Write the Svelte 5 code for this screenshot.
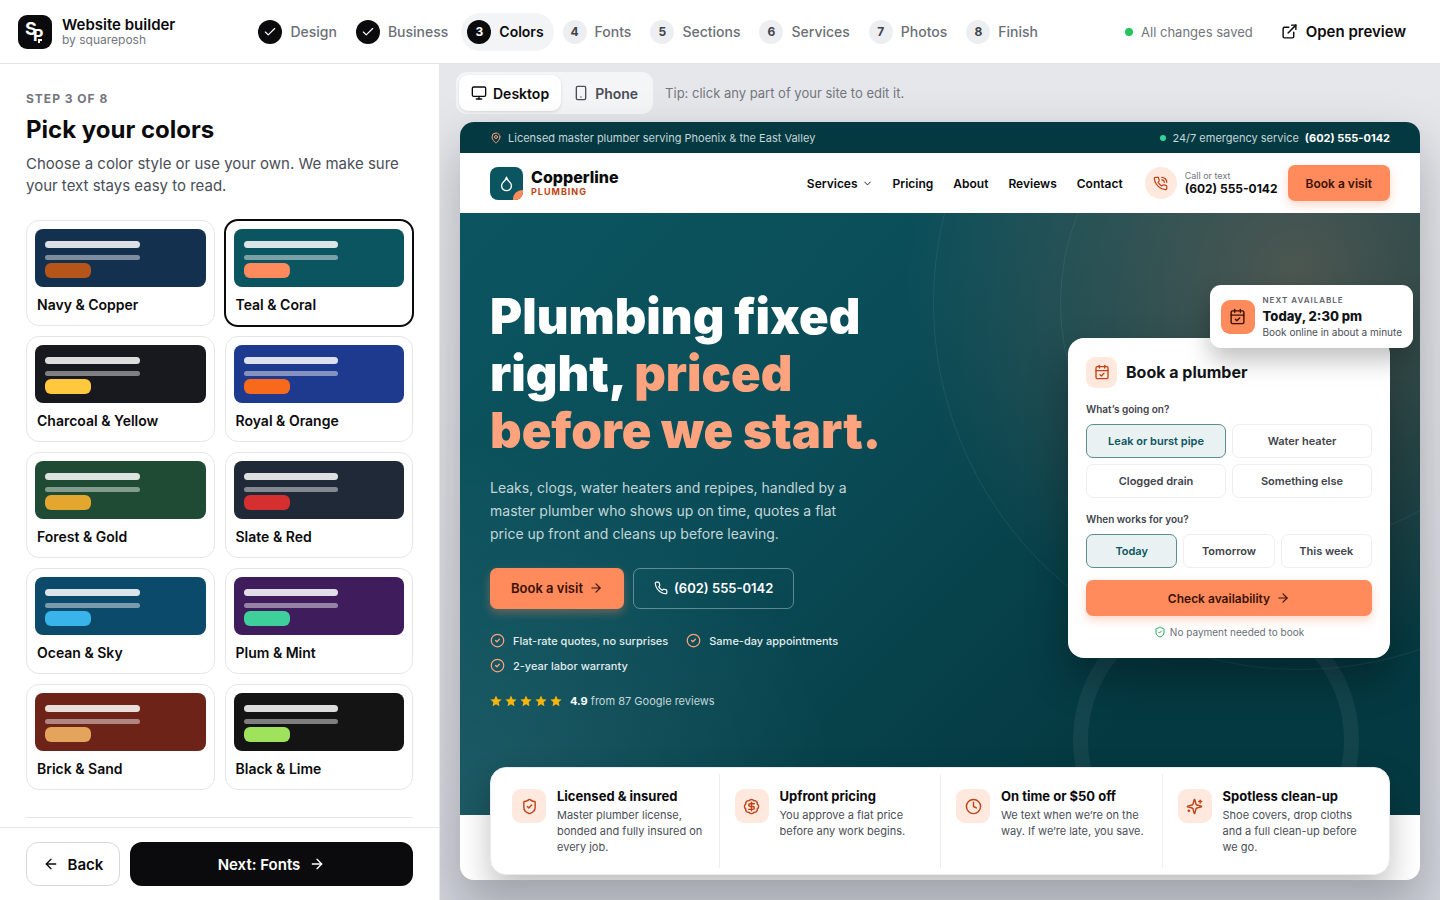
<script>
  const icons = {
    check: ["M20 6 9 17l-5-5"],
    right: ["M5 12h14", "m12 5 7 7-7 7"],
    left: ["m12 19-7-7 7-7", "M19 12H5"],
    down: ["m6 9 6 6 6-6"],
    external: [
      "M15 3h6v6",
      "M10 14 21 3",
      "M18 13v6a2 2 0 0 1-2 2H5a2 2 0 0 1-2-2V8a2 2 0 0 1 2-2h6"
    ],
    monitor: [
      "M4 3h16a2 2 0 0 1 2 2v10a2 2 0 0 1-2 2H4a2 2 0 0 1-2-2V5a2 2 0 0 1 2-2z",
      "M8 21h8",
      "M12 17v4"
    ],
    mobile: [
      "M7 2h10a2 2 0 0 1 2 2v16a2 2 0 0 1-2 2H7a2 2 0 0 1-2-2V4a2 2 0 0 1 2-2z",
      "M12 18h.01"
    ],
    pin: [
      "M20 10c0 4.993-5.539 10.193-7.399 11.799a1 1 0 0 1-1.202 0C9.539 20.193 4 14.993 4 10a8 8 0 0 1 16 0",
      "M15 10a3 3 0 1 1-6 0 3 3 0 0 1 6 0"
    ],
    drop: [
      "M12 22a7 7 0 0 0 7-7c0-2-1-3.9-3-5.5s-3.5-4-4-6.5c-.5 2.5-2 4.9-4 6.5C6 11.1 5 13 5 15a7 7 0 0 0 7 7z"
    ],
    phone: [
      "M22 16.92v3a2 2 0 0 1-2.18 2 19.79 19.79 0 0 1-8.63-3.07 19.5 19.5 0 0 1-6-6 19.79 19.79 0 0 1-3.07-8.67A2 2 0 0 1 4.11 2h3a2 2 0 0 1 2 1.72 12.84 12.84 0 0 0 .7 2.81 2 2 0 0 1-.45 2.11L8.09 9.91a16 16 0 0 0 6 6l1.27-1.27a2 2 0 0 1 2.11-.45 12.84 12.84 0 0 0 2.81.7A2 2 0 0 1 22 16.92z"
    ],
    calendar: [
      "M8 2v4",
      "M16 2v4",
      "M5 4h14a2 2 0 0 1 2 2v14a2 2 0 0 1-2 2H5a2 2 0 0 1-2-2V6a2 2 0 0 1 2-2z",
      "M3 10h18",
      "m9 16 2 2 4-4"
    ],
    shield: [
      "M20 13c0 5-3.5 7.5-7.66 8.95a1 1 0 0 1-.67-.01C7.5 20.5 4 18 4 13V6a1 1 0 0 1 1-1c2 0 4.5-1.2 6.24-2.72a1.17 1.17 0 0 1 1.52 0C14.51 3.81 17 5 19 5a1 1 0 0 1 1 1z",
      "m9 12 2 2 4-4"
    ],
    circleCheck: ["M22 12a10 10 0 1 1-20 0 10 10 0 0 1 20 0", "m9 12 2 2 4-4"],
    dollar: [
      "M3.85 8.62a4 4 0 0 1 4.78-4.77 4 4 0 0 1 6.74 0 4 4 0 0 1 4.78 4.78 4 4 0 0 1 0 6.74 4 4 0 0 1-4.77 4.78 4 4 0 0 1-6.75 0 4 4 0 0 1-4.78-4.77 4 4 0 0 1 0-6.76Z",
      "M16 8h-6a2 2 0 1 0 0 4h4a2 2 0 1 1 0 4H8",
      "M12 18V6"
    ],
    clock: ["M22 12a10 10 0 1 1-20 0 10 10 0 0 1 20 0", "M12 6v6l4 2"],
    sparkles: [
      "M9.937 15.5A2 2 0 0 0 8.5 14.063l-6.135-1.582a.5.5 0 0 1 0-.962L8.5 9.936A2 2 0 0 0 9.937 8.5l1.582-6.135a.5.5 0 0 1 .963 0L14.063 8.5A2 2 0 0 0 15.5 9.937l6.135 1.581a.5.5 0 0 1 0 .964L15.5 14.063a2 2 0 0 0-1.437 1.437l-1.582 6.135a.5.5 0 0 1-.963 0z",
      "M20 3v4",
      "M22 5h-4",
      "M4 17v2",
      "M5 18H3"
    ]
  };
  icons.call = ["M14 2a8 8 0 0 1 8 8", "M14 6a4 4 0 0 1 4 4", ...icons.phone];

  const steps = ["Design", "Business", "Colors", "Fonts", "Sections", "Services", "Photos", "Finish"];
  const current = 2;

  const palettes = [
    { name: "Navy & Copper", base: "#14304f", accent: "#b5551a" },
    { name: "Teal & Coral", base: "#0b5560", accent: "#ff8a5c" },
    { name: "Charcoal & Yellow", base: "#18181f", accent: "#ffc83d" },
    { name: "Royal & Orange", base: "#1e3a8f", accent: "#f9691c" },
    { name: "Forest & Gold", base: "#1f4a33", accent: "#e3a62f" },
    { name: "Slate & Red", base: "#1f2937", accent: "#d62f2f" },
    { name: "Ocean & Sky", base: "#0c4a6b", accent: "#38b4ea" },
    { name: "Plum & Mint", base: "#3f1d5c", accent: "#3fcf9b" },
    { name: "Brick & Sand", base: "#6e2319", accent: "#e3a45c" },
    { name: "Black & Lime", base: "#141414", accent: "#9fe35c" }
  ];

  const problems = ["Leak or burst pipe", "Water heater", "Clogged drain", "Something else"];
  const days = ["Today", "Tomorrow", "This week"];
  const promises = ["Flat-rate quotes, no surprises", "Same-day appointments", "2-year labor warranty"];

  const features = [
    { icon: "shield", title: "Licensed & insured", text: "Master plumber license, bonded and fully insured on every job." },
    { icon: "dollar", title: "Upfront pricing", text: "You approve a flat price before any work begins." },
    { icon: "clock", title: "On time or $50 off", text: "We text when we’re on the way. If we’re late, you save." },
    { icon: "sparkles", title: "Spotless clean-up", text: "Shoe covers, drop cloths and a full clean-up before we go." }
  ];

  let palette = $state("Teal & Coral");
  let device = $state("Desktop");
  let problem = $state("Leak or burst pipe");
  let day = $state("Today");
</script>

{#snippet icon(name, size, weight = 2)}
  <svg
    width={size}
    height={size}
    viewBox="0 0 24 24"
    fill="none"
    stroke="currentColor"
    stroke-width={weight}
    stroke-linecap="round"
    stroke-linejoin="round"
    aria-hidden="true"
  >
    {#each icons[name] as d}
      <path {d} />
    {/each}
  </svg>
{/snippet}

<div class="app">
  <header class="bar">
    <div class="brand">
      <svg class="logo" width="34" height="34" viewBox="0 0 34 34" aria-hidden="true">
        <rect width="34" height="34" rx="9" />
        <text x="7" y="20" font-size="18">S</text>
        <text x="15" y="26" font-size="16">P</text>
        <path d="M21 28v-3h3" />
      </svg>
      <div>
        <strong>Website builder</strong>
        <span>by squareposh</span>
      </div>
    </div>

    <nav class="steps" aria-label="Steps">
      {#each steps as step, i}
        <button class="step" class:current={i === current} class:done={i < current}>
          <span class="num">
            {#if i < current}
              {@render icon("check", 14)}
            {:else}
              {i + 1}
            {/if}
          </span>
          {step}
        </button>
      {/each}
    </nav>

    <div class="status">
      <span class="saved"><i></i>All changes saved</span>
      <button class="open">{@render icon("external", 17)}Open preview</button>
    </div>
  </header>

  <div class="main">
    <aside class="panel">
      <div class="scroll">
        <p class="eyebrow">STEP 3 OF 8</p>
        <h1>Pick your colors</h1>
        <p class="intro">Choose a color style or use your own. We make sure your text stays easy to read.</p>

        <div class="palettes">
          {#each palettes as p}
            <button class="palette" aria-pressed={palette === p.name} onclick={() => (palette = p.name)}>
              <span class="swatch" style:background={p.base}>
                <i class="line"></i>
                <i class="line thin"></i>
                <i class="pill" style:background={p.accent}></i>
              </span>
              <span class="name">{p.name}</span>
            </button>
          {/each}
        </div>
        <hr />
      </div>

      <footer class="actions">
        <button class="back">{@render icon("left", 16)}Back</button>
        <button class="next">Next: Fonts{@render icon("right", 16)}</button>
      </footer>
    </aside>

    <main class="stage">
      <div class="tools">
        <div class="devices">
          <button aria-pressed={device === "Desktop"} onclick={() => (device = "Desktop")}>
            {@render icon("monitor", 16)}Desktop
          </button>
          <button aria-pressed={device === "Phone"} onclick={() => (device = "Phone")}>
            {@render icon("mobile", 16)}Phone
          </button>
        </div>
        <span class="tip">Tip: click any part of your site to edit it.</span>
      </div>

      <div class="site">
        <div class="topbar">
          <span class="area">{@render icon("pin", 12)}Licensed master plumber serving Phoenix &amp; the East Valley</span>
          <span class="emergency"><i></i>24/7 emergency service <b>(602) 555-0142</b></span>
        </div>

        <div class="nav">
          <a class="company" href="#home">
            <span class="mark">{@render icon("drop", 17)}</span>
            <span>
              <strong>Copperline</strong>
              <small>PLUMBING</small>
            </span>
          </a>
          <nav class="links">
            <a href="#services">Services {@render icon("down", 11)}</a>
            <a href="#pricing">Pricing</a>
            <a href="#about">About</a>
            <a href="#reviews">Reviews</a>
            <a href="#contact">Contact</a>
          </nav>
          <a class="call" href="#call">
            <span class="round">{@render icon("call", 15)}</span>
            <span>
              <small>Call or text</small>
              <b>(602) 555-0142</b>
            </span>
          </a>
          <button class="cta small">Book a visit</button>
        </div>

        <section class="hero">
          <div class="rings" aria-hidden="true">
            <i class="outer"></i>
            <i class="inner"></i>
            <i class="thick"></i>
          </div>

          <div class="pitch">
            <h2>
              <span>Plumbing fixed</span>
              <span>right, <em>priced</em></span>
              <span><em>before we start.</em></span>
            </h2>
            <p class="lead">
              Leaks, clogs, water heaters and repipes, handled by a master plumber who shows up on time, quotes a flat
              price up front and cleans up before leaving.
            </p>
            <div class="buttons">
              <button class="cta">Book a visit {@render icon("right", 14)}</button>
              <button class="ghost">{@render icon("phone", 14)}(602) 555-0142</button>
            </div>
            <ul class="promises">
              {#each promises as promise}
                <li>{@render icon("circleCheck", 15)}{promise}</li>
              {/each}
            </ul>
            <div class="rating">
              <span class="stars">
                {#each Array(5) as _}
                  <svg width="12" height="12" viewBox="0 0 24 24" aria-hidden="true">
                    <path d="M12 1l3.300 7.300 7.900.9-5.900 5.400 1.600 7.900-6.900-4-6.900 4 1.600-7.900L.8 9.200l7.900-.9z" />
                  </svg>
                {/each}
              </span>
              <span><b>4.9</b> from 87 Google reviews</span>
            </div>
          </div>

          <div class="booking">
            <div class="slot">
              <span class="tile solid">{@render icon("calendar", 17)}</span>
              <div>
                <small>NEXT AVAILABLE</small>
                <strong>Today, 2:30 pm</strong>
                <span>Book online in about a minute</span>
              </div>
            </div>

            <h3><span class="tile">{@render icon("calendar", 16)}</span>Book a plumber</h3>
            <p class="question">What’s going on?</p>
            <div class="choices">
              {#each problems as option}
                <button aria-pressed={problem === option} onclick={() => (problem = option)}>{option}</button>
              {/each}
            </div>
            <p class="question">When works for you?</p>
            <div class="choices three">
              {#each days as option}
                <button aria-pressed={day === option} onclick={() => (day = option)}>{option}</button>
              {/each}
            </div>
            <button class="cta wide">Check availability {@render icon("right", 14)}</button>
            <p class="note">{@render icon("shield", 12)}No payment needed to book</p>
          </div>
        </section>

        <div class="features">
          {#each features as f}
            <div class="feature">
              <span class="tile">{@render icon(f.icon, 17)}</span>
              <div>
                <h4>{f.title}</h4>
                <p>{f.text}</p>
              </div>
            </div>
          {/each}
        </div>
      </div>
    </main>
  </div>
</div>

<style>
  :global(body) {
    margin: 0;
  }
  .app,
  .app :global(*) {
    box-sizing: border-box;
  }
  .app {
    display: flex;
    flex-direction: column;
    height: 100vh;
    overflow: hidden;
    background: #fff;
    color: #0b0b0d;
    font-family: Inter, "Liberation Sans", sans-serif;
    font-size: 14px;
  }
  button {
    display: inline-flex;
    align-items: center;
    justify-content: center;
    margin: 0;
    padding: 0;
    border: 0;
    background: none;
    color: inherit;
    font: inherit;
    cursor: pointer;
    white-space: nowrap;
  }
  a {
    color: inherit;
    text-decoration: none;
  }
  p,
  h1,
  h2,
  h3,
  h4,
  ul {
    margin: 0;
    padding: 0;
  }
  i {
    display: block;
  }
  svg {
    flex: none;
  }

  /* builder header */
  .bar {
    display: flex;
    align-items: center;
    justify-content: space-between;
    flex: none;
    height: 64px;
    padding: 0 18px;
    border-bottom: 1px solid #e4e6ea;
  }
  .brand {
    display: flex;
    align-items: center;
    gap: 10px;
  }
  .brand strong,
  .brand span {
    display: block;
  }
  .brand strong {
    font-size: 15px;
    font-weight: 600;
    line-height: 16px;
  }
  .brand span {
    color: #73767d;
    font-size: 12px;
    line-height: 14px;
  }
  .logo rect {
    fill: #0b0b0d;
  }
  .logo text {
    fill: #fff;
    font-weight: 700;
  }
  .logo path {
    fill: none;
    stroke: #fff;
    stroke-width: 2;
  }
  .steps {
    display: flex;
    gap: 3px;
  }
  .step {
    gap: 8px;
    height: 38px;
    padding: 0 10px 0 6px;
    border-radius: 19px;
    color: #6b6f76;
    font-weight: 500;
  }
  .num {
    display: flex;
    align-items: center;
    justify-content: center;
    width: 24px;
    height: 24px;
    border-radius: 50%;
    background: #edeef1;
    color: #3f434b;
    font-size: 12px;
    font-weight: 700;
  }
  .done .num,
  .current .num {
    background: #0b0b0d;
    color: #fff;
  }
  .step.current {
    background: #f3f4f6;
    color: #0b0b0d;
    font-weight: 600;
  }
  .status,
  .saved {
    display: flex;
    align-items: center;
  }
  .status {
    gap: 12px;
  }
  .saved {
    gap: 8px;
    color: #73767d;
    font-size: 13px;
  }
  .saved i {
    width: 8px;
    height: 8px;
    border-radius: 50%;
    background: #22c55e;
  }
  .open {
    gap: 8px;
    height: 40px;
    padding: 0 16px;
    font-size: 15px;
    font-weight: 600;
  }

  .main {
    display: flex;
    flex: 1;
    min-height: 0;
  }

  /* left panel */
  .panel {
    display: flex;
    flex-direction: column;
    flex: none;
    width: 440px;
    border-right: 1px solid #e4e6ea;
  }
  .scroll {
    flex: 1;
    min-height: 0;
    overflow: hidden;
    padding: 26px 26px 0;
  }
  .eyebrow {
    color: #73767d;
    font-size: 12px;
    font-weight: 700;
    line-height: 17px;
    letter-spacing: 1px;
  }
  h1 {
    margin-top: 7px;
    font-size: 24px;
    font-weight: 700;
    line-height: 32px;
  }
  .intro {
    margin-top: 7px;
    color: #4a4e57;
    font-size: 15px;
    line-height: 22px;
  }
  .palettes {
    display: grid;
    grid-template-columns: 1fr 1fr;
    gap: 10px;
    margin-top: 23px;
  }
  .palette {
    display: block;
    padding: 8px 8px 10px;
    border: 1px solid #e4e6ea;
    border-radius: 13px;
    text-align: left;
  }
  .palette[aria-pressed="true"] {
    border-color: transparent;
    outline: 2px solid #0b0b0d;
    outline-offset: -1px;
  }
  .swatch {
    display: block;
    height: 58px;
    padding: 12px 10px;
    border-radius: 8px;
  }
  .line {
    width: 63%;
    height: 7px;
    border-radius: 4px;
    background: rgba(255, 255, 255, 0.85);
  }
  .line.thin {
    height: 5px;
    margin-top: 7px;
    background: rgba(255, 255, 255, 0.45);
  }
  .pill {
    width: 46px;
    height: 15px;
    margin-top: 3px;
    border-radius: 6px;
  }
  .name {
    display: block;
    margin: 8px 2px 0;
    font-weight: 600;
    line-height: 20px;
  }
  hr {
    margin: 27px 0 0;
    border: 0;
    border-top: 1px solid #e4e6ea;
  }
  .actions {
    display: flex;
    gap: 10px;
    padding: 14px 26px;
    border-top: 1px solid #e4e6ea;
  }
  .actions button {
    gap: 9px;
    height: 44px;
    border-radius: 12px;
    font-size: 15px;
    font-weight: 600;
  }
  .back {
    width: 94px;
    border: 1px solid #d5d7dc;
  }
  .next {
    flex: 1;
    background: #0b0b0d;
    color: #fff;
  }

  /* preview */
  .stage {
    display: flex;
    flex-direction: column;
    flex: 1;
    min-width: 0;
    overflow: hidden;
    padding: 8px 20px 20px;
    background: linear-gradient(#e6e7eb, #d1d4db);
  }
  .tools {
    display: flex;
    align-items: center;
    gap: 12px;
    flex: none;
    height: 42px;
    margin: 0 0 8px -4px;
  }
  .devices {
    display: flex;
    padding: 3px;
    border-radius: 11px;
    background: #f4f5f7;
  }
  .devices button {
    gap: 6px;
    height: 36px;
    padding: 0 12px;
    border-radius: 9px;
    color: #4a4e57;
    font-weight: 600;
  }
  .devices button[aria-pressed="true"] {
    background: #fff;
    color: #0b0b0d;
    box-shadow: 0 1px 3px rgba(0, 0, 0, 0.12);
  }
  .tip {
    color: #73767d;
    font-size: 13px;
  }
  .site {
    flex: 1;
    min-height: 0;
    overflow: hidden;
    border-radius: 14px;
    background: #fff;
    box-shadow: 0 24px 50px rgba(11, 11, 20, 0.26);
    font-size: 11px;
  }
  .topbar {
    display: flex;
    align-items: center;
    justify-content: space-between;
    height: 31px;
    padding: 0 30px;
    background: #053941;
    color: #c3d6d9;
  }
  .area,
  .emergency {
    display: flex;
    align-items: center;
    gap: 6px;
  }
  .area svg {
    color: #ffa37e;
  }
  .emergency i {
    width: 6px;
    height: 6px;
    border-radius: 50%;
    background: #34d399;
  }
  .emergency b {
    color: #fff;
  }
  .nav {
    display: flex;
    align-items: center;
    height: 60px;
    padding: 0 30px;
  }
  .company {
    display: flex;
    align-items: center;
    gap: 8px;
  }
  .mark {
    position: relative;
    display: flex;
    align-items: center;
    justify-content: center;
    width: 33px;
    height: 33px;
    overflow: hidden;
    border-radius: 8px;
    background: #0b5560;
    color: #fff;
  }
  .mark::after {
    content: "";
    position: absolute;
    right: 0;
    bottom: 0;
    width: 10px;
    height: 10px;
    border-radius: 9px 0 0 0;
    background: #ff8a5c;
  }
  .company strong,
  .company small {
    display: block;
  }
  .company strong {
    font-size: 16px;
    font-weight: 800;
    line-height: 18px;
  }
  .company small {
    color: #bf4316;
    font-size: 9px;
    font-weight: 700;
    line-height: 12px;
    letter-spacing: 1px;
  }
  .links {
    display: flex;
    gap: 20px;
    margin-left: auto;
    font-size: 12px;
    font-weight: 600;
  }
  .links a {
    display: flex;
    align-items: center;
    gap: 4px;
  }
  .call {
    display: flex;
    align-items: center;
    gap: 8px;
    margin: 0 10px 0 22px;
  }
  .call small,
  .call b {
    display: block;
  }
  .call small {
    color: #73767d;
    font-size: 9px;
    line-height: 11px;
  }
  .call b {
    font-size: 12px;
    font-weight: 700;
    line-height: 16px;
  }
  .round {
    display: flex;
    align-items: center;
    justify-content: center;
    width: 32px;
    height: 32px;
    border-radius: 50%;
    background: #ffe8de;
    color: #bf4316;
  }
  .cta {
    gap: 6px;
    height: 41px;
    padding: 0 21px;
    border-radius: 7px;
    background: #ff8a5c;
    box-shadow: 0 4px 10px rgba(255, 138, 92, 0.35);
    color: #3a1204;
    font-size: 13px;
    font-weight: 600;
  }
  .cta.small,
  .cta.wide {
    height: 36px;
    font-size: 12px;
  }
  .cta.small {
    padding: 0 18px;
  }
  .cta.wide {
    width: 100%;
    margin-top: 12px;
  }

  .hero {
    position: relative;
    display: flex;
    align-items: center;
    justify-content: space-between;
    height: 602px;
    padding: 75px 30px 107px;
    background:
      radial-gradient(circle at 87% 10%, rgba(255, 138, 92, 0.28), rgba(255, 138, 92, 0) 390px),
      radial-gradient(circle at 0% 100%, rgba(255, 255, 255, 0.08), rgba(255, 255, 255, 0) 380px),
      linear-gradient(135deg, #0b5560 0%, #0a4d58 35%, #053941 75%);
  }
  .rings {
    position: absolute;
    inset: 0;
    overflow: hidden;
  }
  .rings i {
    position: absolute;
    border: 1px solid rgba(255, 255, 255, 0.07);
    border-radius: 50%;
  }
  .rings .outer {
    top: -277px;
    right: -247px;
    width: 734px;
    height: 734px;
  }
  .rings .inner {
    top: -150px;
    right: -120px;
    width: 480px;
    height: 480px;
  }
  .rings .thick {
    right: 61px;
    bottom: -68px;
    width: 286px;
    height: 286px;
    border: 15px solid rgba(255, 255, 255, 0.06);
  }
  .pitch {
    position: relative;
    width: 400px;
    color: #c3d6d9;
  }
  h2 {
    color: #fff;
    font-size: 49px;
    font-weight: 900;
    line-height: 57px;
  }
  h2 span {
    display: block;
  }
  h2 em {
    color: #ffa37e;
    font-style: normal;
  }
  .lead {
    max-width: 370px;
    margin-top: 17px;
    font-size: 14px;
    line-height: 23px;
  }
  .buttons {
    display: flex;
    gap: 9px;
    margin-top: 23px;
  }
  .ghost {
    gap: 6px;
    height: 41px;
    padding: 0 20px;
    border: 1px solid rgba(255, 255, 255, 0.35);
    border-radius: 7px;
    color: #fff;
    font-size: 13px;
    font-weight: 600;
  }
  .promises {
    display: flex;
    flex-wrap: wrap;
    gap: 7px 18px;
    margin-top: 23px;
    color: #e1eced;
    font-weight: 500;
    list-style: none;
  }
  .promises li {
    display: flex;
    align-items: center;
    gap: 8px;
    line-height: 18px;
  }
  .promises svg {
    color: #ffa37e;
  }
  .rating {
    display: flex;
    align-items: center;
    gap: 8px;
    margin-top: 18px;
    line-height: 16px;
  }
  .rating b {
    color: #fff;
  }
  .stars {
    display: flex;
    gap: 3px;
  }
  .stars path {
    fill: #f5b50b;
  }

  .booking {
    position: relative;
    width: 322px;
    padding: 18px;
    border-radius: 16px;
    background: #fff;
    box-shadow: 0 20px 40px rgba(0, 0, 0, 0.3);
    color: #121417;
  }
  .tile {
    display: flex;
    align-items: center;
    justify-content: center;
    flex: none;
    width: 34px;
    height: 34px;
    border-radius: 9px;
    background: #ffe8de;
    color: #bf4316;
  }
  .tile.solid {
    background: #ff8a5c;
    color: #3a1204;
  }
  .slot {
    position: absolute;
    top: -53px;
    right: -23px;
    display: flex;
    align-items: center;
    gap: 8px;
    padding: 9px 11px;
    border-radius: 11px;
    background: #fff;
    box-shadow: 0 12px 24px rgba(0, 0, 0, 0.25);
    white-space: nowrap;
  }
  .slot small,
  .slot strong,
  .slot div span {
    display: block;
  }
  .slot small {
    color: #5c6068;
    font-size: 8px;
    font-weight: 600;
    line-height: 13px;
    letter-spacing: 1px;
  }
  .slot strong {
    font-size: 13px;
    font-weight: 800;
    line-height: 18px;
  }
  .slot div span {
    color: #4a4e57;
    font-size: 10px;
    line-height: 14px;
  }
  h3 {
    display: flex;
    align-items: center;
    gap: 9px;
    font-size: 16px;
    font-weight: 700;
    line-height: 32px;
  }
  h3 .tile {
    width: 31px;
    height: 31px;
  }
  .question {
    margin-top: 13px;
    color: #3f434b;
    font-size: 10px;
    font-weight: 600;
    line-height: 16px;
  }
  .choices {
    display: grid;
    grid-template-columns: 1fr 1fr;
    gap: 6px;
    margin-top: 7px;
  }
  .choices.three {
    grid-template-columns: 1fr 1fr 1fr;
  }
  .choices button {
    height: 34px;
    border: 1px solid #eceef0;
    border-radius: 7px;
    color: #3f434b;
    font-size: 11px;
    font-weight: 600;
  }
  .choices button[aria-pressed="true"] {
    border-color: #5b8b93;
    background: #e9f1f2;
    color: #0b5560;
  }
  .note {
    display: flex;
    align-items: center;
    justify-content: center;
    gap: 4px;
    margin-top: 8px;
    color: #6b6f76;
    font-size: 10px;
    line-height: 16px;
  }
  .note svg {
    color: #22a35a;
  }

  .features {
    position: relative;
    display: grid;
    grid-template-columns: repeat(4, 1fr);
    margin: -48px 30px 0;
    padding: 6px;
    border: 1px solid #e9ebee;
    border-radius: 16px;
    background: #fff;
    box-shadow: 0 16px 32px rgba(0, 0, 0, 0.25);
  }
  .feature {
    display: flex;
    gap: 11px;
    padding: 15px 15px 13px;
  }
  .feature + .feature {
    border-left: 1px solid #eceef0;
  }
  h4 {
    font-size: 13px;
    font-weight: 700;
    line-height: 14px;
  }
  .feature p {
    margin-top: 4px;
    color: #4a4e57;
    line-height: 16px;
  }
</style>
